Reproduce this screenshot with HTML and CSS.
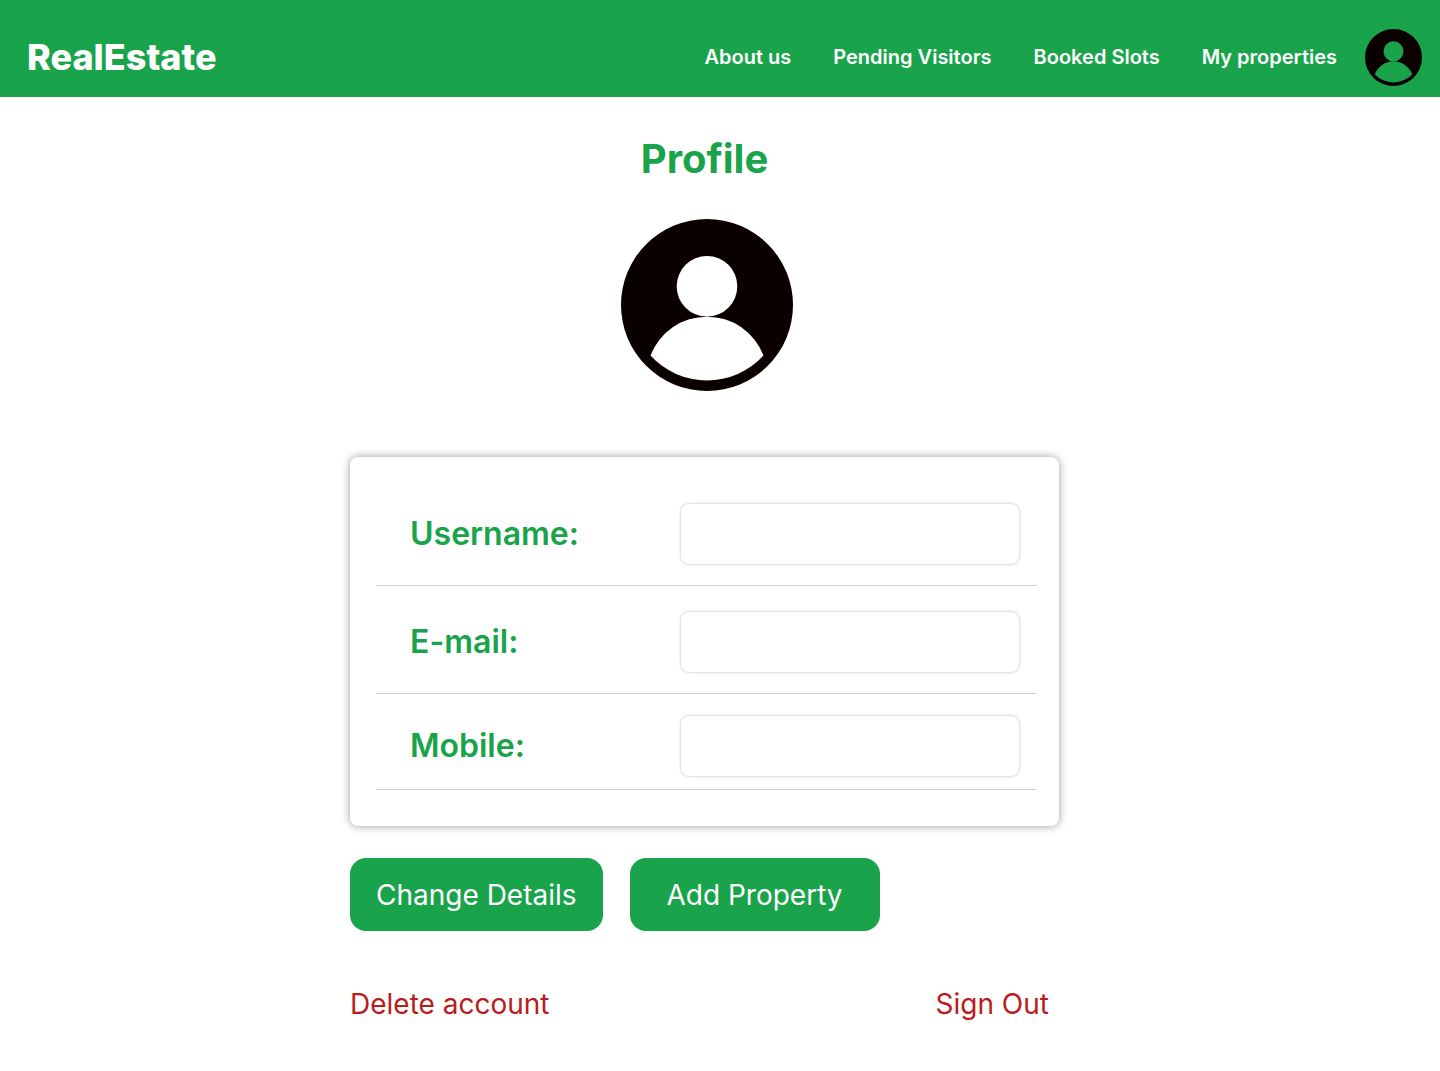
FILE: index.html
```html
<!DOCTYPE html>
<html lang="en">
<head>
  <meta charset="utf-8">
  <meta name="viewport" content="width=device-width, initial-scale=1">
  <title>RealEstate - Profile</title>
  <link rel="stylesheet" href="styles.css">
</head>
<body>
  <header class="site-header">
    <a class="brand" href="#">RealEstate</a>
    <nav class="site-nav" aria-label="Main">
      <a class="nav-link" href="#">About us</a>
      <a class="nav-link" href="#">Pending Visitors</a>
      <a class="nav-link" href="#">Booked Slots</a>
      <a class="nav-link" href="#">My properties</a>
    </nav>
    <a class="account-link" href="#" aria-label="Profile">
      <svg class="avatar-small" viewBox="0 0 172 172" aria-hidden="true">
        <path fill-rule="evenodd" d="M86 0a86 86 0 1 1 0 172a86 86 0 1 1 0-172zM86 37a30.3 30.3 0 1 0 0 60.6a30.3 30.3 0 1 0 0-60.6zM29.5 136.5A60.5 60.5 0 0 1 142.5 136.5A76.5 76.5 0 0 1 29.5 136.5z"/>
      </svg>
    </a>
  </header>

  <main class="profile">
    <h1 class="profile-title">Profile</h1>
    <svg class="avatar-large" viewBox="0 0 172 172" role="img" aria-label="Profile picture">
      <path fill-rule="evenodd" d="M86 0a86 86 0 1 1 0 172a86 86 0 1 1 0-172zM86 37a30.3 30.3 0 1 0 0 60.6a30.3 30.3 0 1 0 0-60.6zM29.5 136.5A60.5 60.5 0 0 1 142.5 136.5A76.5 76.5 0 0 1 29.5 136.5z"/>
    </svg>

    <form class="profile-form">
      <div class="card">
        <div class="field">
          <label class="field-label" for="username">Username:</label>
          <input class="field-input" id="username" type="text">
        </div>
        <div class="field">
          <label class="field-label" for="email">E-mail:</label>
          <input class="field-input" id="email" type="email">
        </div>
        <div class="field field-last">
          <label class="field-label" for="mobile">Mobile:</label>
          <input class="field-input" id="mobile" type="tel">
        </div>
      </div>
      <div class="actions">
        <button class="button" type="button">Change Details</button>
        <button class="button" type="button">Add Property</button>
      </div>
    </form>

    <div class="account-actions">
      <a class="danger-link" href="#">Delete account</a>
      <a class="danger-link" href="#">Sign Out</a>
    </div>
  </main>
</body>
</html>
```
FILE: styles.css
```css
:root {
  --green: #19a34a;
  --red: #b91c1c;
  --ink: #0a0000;
}

* {
  box-sizing: border-box;
}

body {
  margin: 0;
  background: #fff;
  font-family: Inter, "Liberation Sans", sans-serif;
}

a {
  text-decoration: none;
}

.site-header {
  display: flex;
  align-items: center;
  padding: 29px 18px 11px 27px;
  background: var(--green);
}

.brand,
.site-nav {
  padding-bottom: 2px;
}

.brand {
  color: #fff;
  font-size: 36px;
  font-weight: 800;
  line-height: 44px;
}

.site-nav {
  display: flex;
  gap: 42px;
  margin-left: auto;
}

.nav-link {
  color: #fff;
  font-size: 20px;
  font-weight: 600;
  line-height: 24px;
}

.account-link {
  margin-left: 28px;
}

.avatar-small {
  display: block;
  width: 57px;
  height: 57px;
  fill: var(--ink);
}

.profile {
  display: flex;
  flex-direction: column;
  align-items: center;
  padding: 38px 31px 48px 0;
}

.profile-title {
  margin: 0;
  color: var(--green);
  font-size: 40px;
  font-weight: 700;
  line-height: 48px;
}

.avatar-large {
  width: 172px;
  height: 172px;
  margin: 36px 0 66px 4px;
  fill: var(--ink);
}

.profile-form,
.account-actions {
  width: 100%;
  max-width: 709px;
}

.card {
  padding: 47px 22px 36px 26px;
  border-radius: 8px;
  background: #fff;
  box-shadow: 0 0 8px rgba(0, 0, 0, 0.4);
}

.field {
  display: flex;
  align-items: center;
  justify-content: space-between;
  padding: 0 18px 21px 34px;
  border-bottom: 1px solid #cfcfcf;
}

.field + .field {
  padding-top: 26px;
}

.field + .field-last {
  padding-top: 22px;
  padding-bottom: 13px;
}

.field-label {
  color: var(--green);
  font-size: 32px;
  font-weight: 600;
  line-height: 40px;
}

.field-input {
  width: 338px;
  height: 60px;
  padding: 0 16px;
  border: 0;
  border-radius: 8px;
  background: #fff;
  box-shadow: 0 0 3px rgba(0, 0, 0, 0.3);
  font: inherit;
  font-size: 20px;
}

.actions {
  display: flex;
  gap: 27px;
  margin-top: 32px;
}

.button {
  min-width: 250px;
  padding: 19px 26px 18px;
  border: 0;
  border-radius: 16px;
  background: var(--green);
  color: #fff;
  font-family: inherit;
  font-size: 28px;
  font-weight: 400;
  line-height: 36px;
}

.account-actions {
  display: flex;
  justify-content: space-between;
  margin-top: 55px;
  padding-right: 10px;
}

.danger-link {
  color: var(--red);
  font-size: 28px;
  font-weight: 400;
  line-height: 36px;
}
```
